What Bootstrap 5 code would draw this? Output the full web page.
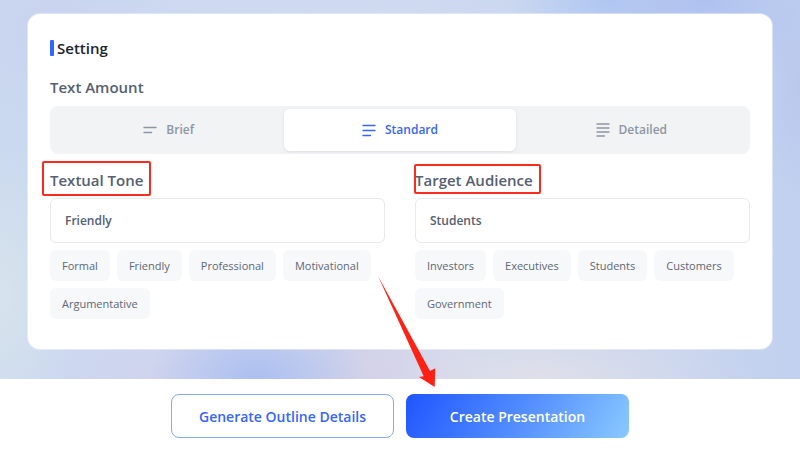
<!DOCTYPE html>
<html lang="en">
<head>
<meta charset="utf-8">
<meta name="viewport" content="width=device-width, initial-scale=1">
<title>Presentation settings</title>
<link rel="stylesheet" href="https://cdn.jsdelivr.net/npm/bootstrap@5.3.0/dist/css/bootstrap.min.css">
<style>
  body { font-family: "Open Sans", "Noto Sans", sans-serif; font-size: 12px; color: #556070; background: #fff; }
  .stage {
    padding: 14px 28px 30px;
    background:
      radial-gradient(ellipse 110px 80px at 32% 101%, #abbdf0 0, rgba(171,189,240,0) 100%),
      radial-gradient(ellipse 130px 90px at 88% 0, #afc1ef 0, rgba(175,193,239,0) 100%),
      radial-gradient(ellipse 100px 60px at 76% 0, #b0c8f2 0, rgba(176,200,242,0) 100%),
      radial-gradient(ellipse 220px 70px at 67% 100%, #dfdfe9 0, rgba(223,223,233,0) 100%),
      radial-gradient(ellipse 120px 90px at 47% 100%, #d0cde8 0, rgba(208,205,232,0) 100%),
      radial-gradient(ellipse 130px 90px at 20% 100%, #d0d4ee 0, rgba(208,212,238,0) 100%),
      radial-gradient(ellipse 80px 150px at 0 78%, #d7e3ec 0, rgba(215,227,236,0) 100%),
      radial-gradient(ellipse 50px 120px at 100% 23%, #b9c9ed 0, rgba(185,201,237,0) 100%),
      radial-gradient(ellipse 120px 90px at 7% 8%, #c9d2ef 0, rgba(201,210,239,0) 100%),
      linear-gradient(90deg, #cad9ef, #cfdaf0 50%, #c2d1ef);
  }
  .panel { padding: 24px 22px 30px; border-radius: 12px; background: #fff; box-shadow: 0 0 0 1px rgba(255,255,255,.4); }
  .panel-title { font-size: 15px; line-height: 20px; font-weight: 600; color: #20242e; margin-bottom: 18px; gap: 3px; }
  .panel-title::before { content: ""; width: 4px; height: 16px; border-radius: 1px; background: #2f66ff; }
  .field-title { display: block; width: fit-content; padding: 0; font-size: 15px; line-height: 22px; font-weight: 600; color: #556070; }
  .segments { height: 48px; padding: 3px; border-radius: 8px; background: #f1f3f5; margin: 8px 0 15px; }
  .segments .btn { gap: 9px; border: 0; border-radius: 6px; font-size: 12px; font-weight: 600; color: #8d96a3; }
  .segments .btn-check:checked + .btn { color: #3767f5; background: #fff; box-shadow: 0 1px 3px rgba(30,45,70,.1); }
  .segments svg { width: 14px; height: 14px; fill: none; stroke: currentColor; stroke-width: 1.4; stroke-linecap: round; }
  .fields { --bs-gutter-x: 30px; }
  .fields .form-control { height: 45px; margin: 7px 0; padding: 0 14px; border: 1px solid #e7e9ec; border-radius: 6px; font-size: 12px; font-weight: 600; color: #556070; }
  .chips { gap: 7px; }
  .chips .btn { height: 31px; padding: 0 12px; border: 0; border-radius: 6px; font-size: 11px; line-height: 31px; color: #5d6776; background: #f7f8fa; }
  .callout { position: absolute; border: 2px solid #fc2b20; border-radius: 2px; pointer-events: none; }
  .callout-tone { inset: -8px auto -5px -8px; width: 109px; }
  .callout-audience { inset: -5px auto -3px -1px; width: 127px; }
  .actions { padding: 15px 16px 13px; gap: 12px; }
  .actions .btn { width: 223px; height: 44px; padding: 0; border-radius: 8px; font-size: 14px; font-weight: 600; }
  .btn-outline { color: #3767f5; background: #fff; border: 1px solid #8aa7f8; }
  .btn-create, .btn-create:hover { color: #fff; border: 0; background: linear-gradient(120deg, #1f55ff, #5792ff 55%, #8ac9ff); }
  .pointer { position: absolute; left: -30px; bottom: calc(100% + 6px); width: 62px; height: 114px; pointer-events: none; }
</style>
<script src="https://cdn.jsdelivr.net/npm/bootstrap@5.3.0/dist/js/bootstrap.bundle.min.js"></script>
</head>
<body>
<main class="stage">
  <section class="panel">
    <h1 class="panel-title d-flex align-items-center">Setting</h1>
    <h2 class="field-title mb-0" id="amount">Text Amount</h2>
    <div class="segments d-flex" role="group" aria-labelledby="amount">
      <input type="radio" class="btn-check" name="amount" id="brief">
      <label class="btn d-flex flex-fill w-100 align-items-center justify-content-center" for="brief">
        <svg viewBox="0 0 14 14" aria-hidden="true"><path d="M1 4.500H13M1 9.500H8.500"/></svg>Brief</label>
      <input type="radio" class="btn-check" name="amount" id="standard" checked>
      <label class="btn d-flex flex-fill w-100 align-items-center justify-content-center" for="standard">
        <svg viewBox="0 0 14 14" aria-hidden="true"><path d="M1 2.500H13M1 7.500H13M1 12.500H8.500"/></svg>Standard</label>
      <input type="radio" class="btn-check" name="amount" id="detailed">
      <label class="btn d-flex flex-fill w-100 align-items-center justify-content-center" for="detailed">
        <svg viewBox="0 0 14 14" aria-hidden="true"><path d="M1 1H13M1 5H13M1 9H13M1 13H8.500"/></svg>Detailed</label>
    </div>
    <div class="row fields">
      <div class="col-6">
        <label class="field-title position-relative" for="tone">Textual Tone<span class="callout callout-tone"></span></label>
        <input class="form-control" type="text" id="tone" value="Friendly">
        <div class="chips d-flex flex-wrap">
          <button type="button" class="btn">Formal</button>
          <button type="button" class="btn">Friendly</button>
          <button type="button" class="btn">Professional</button>
          <button type="button" class="btn">Motivational</button>
          <button type="button" class="btn">Argumentative</button>
        </div>
      </div>
      <div class="col-6">
        <label class="field-title position-relative" for="audience">Target Audience<span class="callout callout-audience"></span></label>
        <input class="form-control" type="text" id="audience" value="Students">
        <div class="chips d-flex flex-wrap">
          <button type="button" class="btn">Investors</button>
          <button type="button" class="btn">Executives</button>
          <button type="button" class="btn">Students</button>
          <button type="button" class="btn">Customers</button>
          <button type="button" class="btn">Government</button>
        </div>
      </div>
    </div>
  </section>
</main>
<footer class="actions d-flex justify-content-center">
  <button type="button" class="btn btn-outline">Generate Outline Details</button>
  <div class="position-relative">
    <button type="button" class="btn btn-create">Create Presentation</button>
    <svg class="pointer" viewBox="0 0 62 114" aria-hidden="true"><path fill="#ff2114" d="M2 2L54 97L59.300 94.300L58.700 113L43 103L47.700 102.300Z"/></svg>
  </div>
</footer>
</body>
</html>
